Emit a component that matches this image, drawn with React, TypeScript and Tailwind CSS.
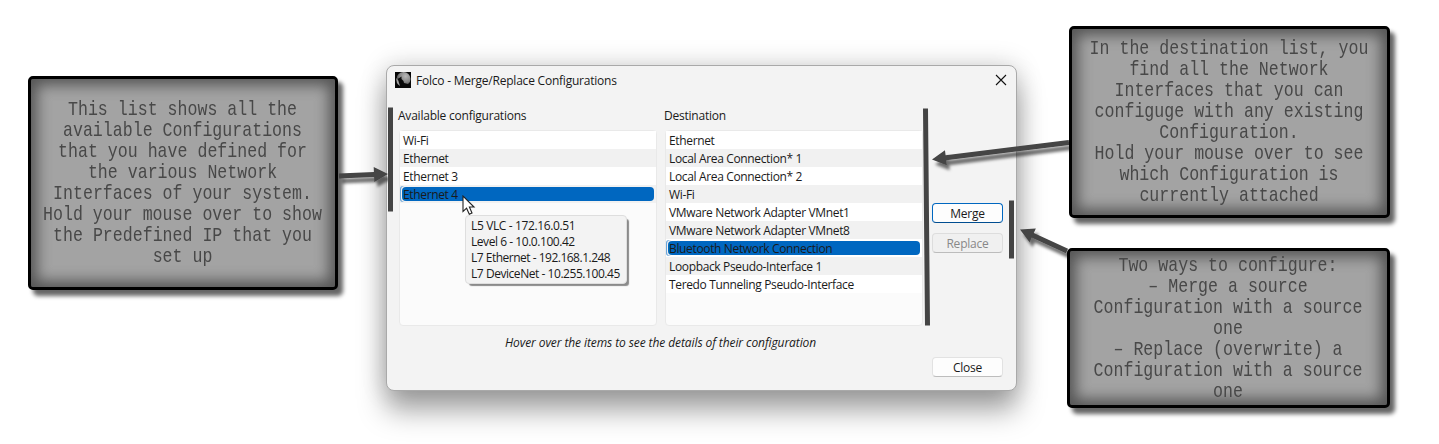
import React from "react";

const configurations = ["Wi-Fi", "Ethernet", "Ethernet 3", "Ethernet 4"];

const destinations = [
  "Ethernet",
  "Local Area Connection* 1",
  "Local Area Connection* 2",
  "Wi-Fi",
  "VMware Network Adapter VMnet1",
  "VMware Network Adapter VMnet8",
  "Bluetooth Network Connection",
  "Loopback Pseudo-Interface 1",
  "Teredo Tunneling Pseudo-Interface",
];

function Callout({ lines, className }: { lines: string[]; className: string }) {
  return (
    <div
      className={`flex shrink-0 flex-col items-center justify-center rounded-[5px] border-[3px] border-black bg-[#a3a3a3] pr-px font-['Liberation_Mono',monospace] text-[16.6px] leading-[21px] text-[#484848] shadow-[5px_6px_4px_rgba(0,0,0,0.6),inset_0_0_14px_6px_#555] ${className}`}
    >
      {lines.map((line, i) => (
        <div key={i} className="scale-y-[1.17] whitespace-pre">{line}</div>
      ))}
    </div>
  );
}

function List({ items, selected, children }: { items: string[]; selected: string; children?: React.ReactNode }) {
  return (
    <div className="relative ml-px h-[196px] w-[258px] rounded-[4px] border border-[#e9e9e9] bg-[#fbfbfb] tracking-[-0.35px]">
      {items.map((item, i) => (
        <div key={item} className={`relative h-[18px] pl-[3px] leading-[20px] whitespace-nowrap ${i % 2 ? "bg-[#f1f1f1]" : "bg-white"}`}>
          {item === selected && (
            <>
              <div className="absolute top-px left-0 h-[16px] w-[4px] rounded-l-[3px] bg-[#6aa5da]" />
              <div className="absolute top-px left-px h-[16px] w-[4px] rounded-l-[4px] bg-[#f1f1f1]" />
              <div className="absolute top-[2px] left-[2px] h-[14px] w-[252px] rounded-[4px] bg-[#0067c0]" />
            </>
          )}
          <span className="relative">{item}</span>
        </div>
      ))}
      {children}
    </div>
  );
}

function Button({ label, className }: { label: string; className: string }) {
  return (
    <button className={`h-[20px] w-[71px] rounded-[4px] border text-center leading-[20px] ${className}`}>{label}</button>
  );
}

function Arrow({ x1, y1, x2, y2 }: { x1: number; y1: number; x2: number; y2: number }) {
  const length = Math.hypot(x2 - x1, y2 - y1);
  const angle = (Math.atan2(y2 - y1, x2 - x1) * 180) / Math.PI;
  return (
    <g filter="url(#arrow-shadow)">
      <g transform={`translate(${x1} ${y1}) rotate(${angle})`}>
        <path d={`M0 -2.5H${length - 14}V-7.5L${length} 0L${length - 14} 7.5V2.5H0Z`} fill="#444" />
      </g>
    </g>
  );
}

function Annotations() {
  return (
    <svg className="pointer-events-none absolute inset-0" width="1439" height="444">
      <defs>
        <filter id="arrow-shadow" filterUnits="userSpaceOnUse" x="0" y="0" width="1439" height="444">
          <feDropShadow dx="3" dy="5" stdDeviation="1.8" floodColor="#000" floodOpacity="0.55" />
        </filter>
      </defs>
      <Arrow x1={339} y1={176} x2={388} y2={174} />
      <Arrow x1={1069} y1={142.5} x2={932} y2={159.5} />
      <Arrow x1={1067} y1={251} x2={1020} y2={229.5} />
      <path d="M390.5 107.500V211.500M925.500 108.500L927.500 325.500M1011.500 200.500V258.500" stroke="#444" strokeWidth="5" />
    </svg>
  );
}

function MoonIcon() {
  return (
    <svg width="16" height="16" viewBox="0 0 16 16">
      <defs>
        <radialGradient id="moon" cx="65%" cy="30%" r="70%">
          <stop offset="0" stopColor="#b8b8b8" />
          <stop offset="0.6" stopColor="#858585" />
          <stop offset="1" stopColor="#444" />
        </radialGradient>
      </defs>
      <path d="M0 0H16V16H0Z" fill="#050505" />
      <circle cx="8.500" cy="7" r="7" fill="url(#moon)" />
      <path d="M5 16L3 12L3.500 8.500L2.500 7L5 5.500L6.500 4.500L6.500 7L8.500 9L9 11L13 12L16 10V16Z" fill="#0a0a0a" />
      <path d="M1.500 6Q0.500 11 5 14L3.500 9.500Z" fill="#a5a5a5" />
    </svg>
  );
}

function Tooltip() {
  return (
    <div className="absolute top-[84px] left-[65px] z-10 h-[69px] w-[162px] rounded-[4px] border border-[#dedede] bg-[#f3f3f3] py-[2px] pl-[5px] leading-[16px] whitespace-nowrap shadow-[3px_3px_1px_-1px_#8a8a8a]">
      <div className="tracking-[-0.37px]">L5 VLC - 172.16.0.51</div>
      <div className="tracking-[-0.45px]">Level 6 - 10.0.100.42</div>
      <div className="tracking-[-0.5px]">L7 Ethernet - 192.168.1.248</div>
      <div className="tracking-[-0.45px]">L7 DeviceNet - 10.255.100.45</div>
    </div>
  );
}

function Dialog() {
  return (
    <section className="mt-[65px] ml-[48px] h-[326px] w-[631px] shrink-0 rounded-[8px] border border-[#a9a9a9] bg-[#f3f3f3] font-['Open_Sans','Noto_Sans',sans-serif] text-[12px] tracking-[-0.22px] text-[#1a1a1a] shadow-[0_20px_28px_rgba(0,0,0,0.34),0_0_26px_rgba(0,0,0,0.18)]">
      <header className="flex h-[41px] items-start justify-between pr-[9px] pl-[8px]">
        <div className="flex gap-[5px] pt-[6px]">
          <MoonIcon />
          <span className="leading-[18px]">Folco - Merge/Replace Configurations</span>
        </div>
        <svg className="mt-[8px]" width="12" height="12" viewBox="0 0 12 12">
          <path d="M1 1L11 11M11 1L1 11" stroke="#111" strokeWidth="1.1" />
        </svg>
      </header>
      <div className="flex pl-[11px]">
        <div className="w-[266px]">
          <div className="mb-[5px] h-[18px] leading-[18px]">Available configurations</div>
          <List items={configurations} selected="Ethernet 4">
            <Tooltip />
            <svg className="absolute top-[64px] left-[62px]" width="14" height="21" viewBox="0 0 14 21">
              <path d="M1 1V16.500L4.600 13.200L7.300 19.200L10 18L7.400 12H12Z" fill="white" stroke="#222" strokeWidth="1.1" />
            </svg>
          </List>
        </div>
        <div className="w-[268px]">
          <div className="mb-[5px] h-[18px] leading-[18px]">Destination</div>
          <List items={destinations} selected="Bluetooth Network Connection" />
        </div>
        <div className="flex flex-col gap-[10px] pt-[96px]">
          <Button label="Merge" className="border-[#0067c0] border-b-[#004d90] bg-[#fdfdfd]" />
          <Button label="Replace" className="border-[#dddddd] border-b-[#bcbcbc] bg-[#f0f0f0] text-[#888]" />
        </div>
      </div>
      <p className="mt-[8px] pl-[118px] leading-[18px] tracking-[-0.09px] whitespace-nowrap italic">Hover over the items to see the details of their configuration</p>
      <div className="flex justify-end pt-[5px] pr-[13px]">
        <Button label="Close" className="border-[#e2e2e2] border-b-[#bdbdbd] bg-[#fdfdfd]" />
      </div>
    </section>
  );
}

export default function App() {
  return (
    <main className="relative flex h-[444px] w-[1439px] items-start overflow-hidden bg-white">
      <Callout
        className="mt-[76px] ml-[28px] h-[214px] w-[310px]"
        lines={[
          "This list shows all the",
          "available Configurations",
          "that you have defined for",
          "the various Network",
          "Interfaces of your system.",
          "Hold your mouse over to show",
          "the Predefined IP that you",
          "set up",
        ]}
      />
      <Dialog />
      <aside className="relative z-10 ml-[50px] flex flex-col items-end pt-[26px]">
        <Callout
          className="h-[192px] w-[321px]"
          lines={[
            "In the destination list, you",
            "find all the Network",
            "Interfaces that you can",
            "configuge with any existing",
            "Configuration.",
            "Hold your mouse over to see",
            "which Configuration is",
            "currently attached",
          ]}
        />
        <Callout
          className="mt-[30px] h-[160px] w-[323px]"
          lines={[
            "Two ways to configure:",
            "– Merge a source",
            "Configuration with a source",
            "one",
            "– Replace (overwrite) a",
            "Configuration with a source",
            "one",
          ]}
        />
      </aside>
      <Annotations />
    </main>
  );
}
